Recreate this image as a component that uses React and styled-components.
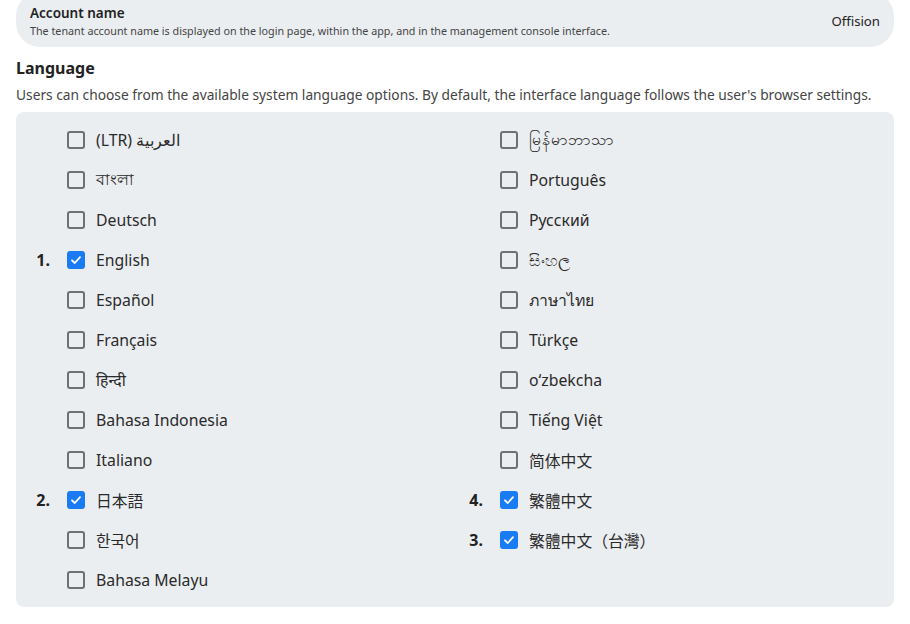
import React from 'react';
import styled, { createGlobalStyle } from 'styled-components';

const GlobalStyle = createGlobalStyle`
  html, body {
    margin: 0;
    padding: 0;
    background: #ffffff;
  }
  body {
    font-family: "Noto Sans", "Noto Sans CJK JP", sans-serif;
    color: #2a2a2a;
  }
`;

const LEFT = [
  { label: '(LTR) العربية' },
  { label: 'বাংলা' },
  { label: 'Deutsch' },
  { label: 'English', order: 1 },
  { label: 'Español' },
  { label: 'Français' },
  { label: 'हिन्दी' },
  { label: 'Bahasa Indonesia' },
  { label: 'Italiano' },
  { label: '日本語', order: 2 },
  { label: '한국어' },
  { label: 'Bahasa Melayu' },
];

const RIGHT = [
  { label: 'မြန်မာဘာသာ' },
  { label: 'Português' },
  { label: 'Русский' },
  { label: 'සිංහල' },
  { label: 'ภาษาไทย' },
  { label: 'Türkçe' },
  { label: 'oʻzbekcha' },
  { label: 'Tiếng Việt' },
  { label: '简体中文' },
  { label: '繁體中文', order: 4 },
  { label: '繁體中文（台灣）', order: 3 },
];

export default function App() {
  return (
    <>
      <GlobalStyle />
      <Page>
        <AccountCard>
          <AccountText>
            <AccountTitle>Account name</AccountTitle>
            <AccountHint>
              The tenant account name is displayed on the login page, within the app, and in the management console interface.
            </AccountHint>
          </AccountText>
          <AccountValue>Offision</AccountValue>
        </AccountCard>

        <SectionTitle>Language</SectionTitle>
        <SectionHint>
          Users can choose from the available system language options. By default, the interface language follows the user's browser settings.
        </SectionHint>

        <LanguagePanel>
          <Column>
            {LEFT.map((l) => (
              <LanguageRow key={l.label} {...l} />
            ))}
          </Column>
          <Column>
            {RIGHT.map((l) => (
              <LanguageRow key={l.label} {...l} />
            ))}
          </Column>
        </LanguagePanel>
      </Page>
    </>
  );
}

function LanguageRow({ label, order }) {
  const checked = order != null;
  return (
    <Row>
      <OrderSlot>{checked ? `${order}.` : ''}</OrderSlot>
      <Box $checked={checked}>
        {checked && (
          <svg width="12" height="12" viewBox="0 0 12 12" fill="none">
            <path d="M2 6.3 L4.8 9 L10 3.2" stroke="#fff" strokeWidth="1.8" strokeLinecap="round" strokeLinejoin="round" />
          </svg>
        )}
      </Box>
      <Label>{label}</Label>
    </Row>
  );
}

// --- STYLES ---
const Page = styled.div`
  padding: 0 16px;
  display: flex;
  flex-direction: column;
`;

const AccountCard = styled.div`
  margin-top: -8px;
  height: 55px;
  box-sizing: border-box;
  background: #ebeef1;
  border-radius: 24px;
  padding: 3px 14px 0 14px;
  display: flex;
  align-items: center;
  justify-content: space-between;
`;

const AccountText = styled.div`
  display: flex;
  flex-direction: column;
  gap: 3px;
`;

const AccountTitle = styled.div`
  font-size: 13.5px;
  line-height: 16px;
  font-weight: 600;
  color: #222;
`;

const AccountHint = styled.div`
  font-size: 10.75px;
  line-height: 14px;
  color: #444;
`;

const AccountValue = styled.div`
  font-size: 13.2px;
  color: #222;
`;

const SectionTitle = styled.div`
  margin-top: 10px;
  font-size: 16px;
  font-weight: 700;
  color: #222;
`;

const SectionHint = styled.div`
  margin-top: 6px;
  font-size: 13.75px;
  color: #444;
`;

const LanguagePanel = styled.div`
  margin-top: 8px;
  background: #ebeef1;
  border-radius: 8px;
  padding: 8px 6px 7px;
  display: grid;
  grid-template-columns: 1fr 1fr;
`;

const Column = styled.div`
  display: flex;
  flex-direction: column;
`;

const Row = styled.div`
  height: 40px;
  display: flex;
  align-items: center;
`;

const OrderSlot = styled.div`
  width: 28px;
  margin-right: 17px;
  text-align: right;
  font-size: 16px;
  font-weight: 700;
  color: #222;
`;

const Box = styled.div`
  width: 18px;
  height: 18px;
  box-sizing: border-box;
  border-radius: 3px;
  border: ${(p) => (p.$checked ? 'none' : '2px solid #707070')};
  background: ${(p) => (p.$checked ? '#1a7cf5' : 'transparent')};
  display: flex;
  align-items: center;
  justify-content: center;
  margin-right: 11px;
`;

const Label = styled.div`
  font-size: 15.8px;
  color: #2a2a2a;
`;
